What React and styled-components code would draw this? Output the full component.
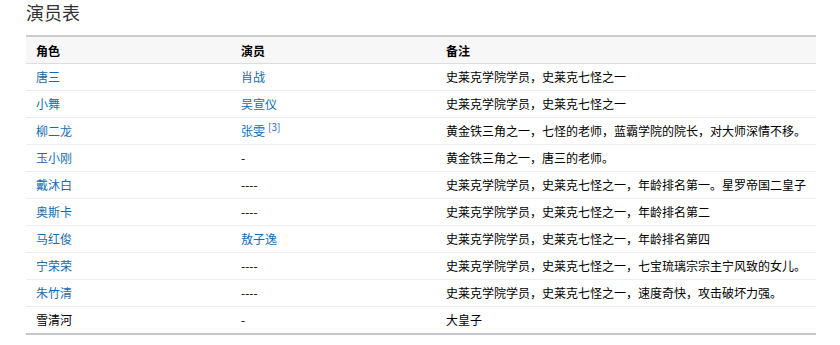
import React from 'react';
import styled, { createGlobalStyle } from 'styled-components';

const GlobalStyle = createGlobalStyle`
    html, body {
        margin: 0;
        padding: 0;
        background: #ffffff;
    }
    body {
        font-family: "Noto Sans CJK SC", "Liberation Sans", sans-serif;
        font-size: 12px;
        color: #222222;
    }
`

const Page = styled.div`
    width: 790px;
    padding: 1px 0 0 26px;
`

const Title = styled.h2`
    margin: 0 0 11px 0;
    height: 23px;
    font-size: 18px;
    line-height: 23px;
    font-weight: normal;
    color: #333333;
`

const Table = styled.table`
    width: 790px;
    border-collapse: collapse;
    table-layout: fixed;
    border-top: 2px solid #cccccc;
    border-bottom: 2px solid #c0c8d1;
`

const Th = styled.th`
    height: 26px;
    padding: 0 0 0 10px;
    text-align: left;
    font-weight: bold;
    font-size: 12px;
    color: #000000;
    background: #f7f7f7;
    border-bottom: 1px solid #dddddd;
    width: ${props => props.w ? `${props.w}px` : 'auto'};
`

const Row = styled.tr`
    & + & td {
        border-top: 1px solid #eeeeee;
    }
`

const Td = styled.td`
    height: 26px;
    padding: 0 0 0 10px;
    font-size: 12px;
    line-height: 16px;
    white-space: nowrap;
    color: ${props => props.link ? '#136cb2' : '#000000'};
`

const Sup = styled.sup`
    font-size: 10px;
    color: #3366cc;
    margin-left: 3px;
    vertical-align: 5px;
    line-height: 0;
`

const SEVEN = '史莱克学院学员，史莱克七怪之一'

const rows = [
    { role: '唐三', actor: '肖战', actorLink: true, note: SEVEN },
    { role: '小舞', actor: '吴宣仪', actorLink: true, note: SEVEN },
    { role: '柳二龙', actor: '张雯', actorLink: true, ref: '[3]', note: '黄金铁三角之一，七怪的老师，蓝霸学院的院长，对大师深情不移。' },
    { role: '玉小刚', actor: '-', note: '黄金铁三角之一，唐三的老师。' },
    { role: '戴沐白', actor: '----', note: SEVEN + '，年龄排名第一。星罗帝国二皇子' },
    { role: '奥斯卡', actor: '----', note: SEVEN + '，年龄排名第二' },
    { role: '马红俊', actor: '敖子逸', actorLink: true, note: SEVEN + '，年龄排名第四' },
    { role: '宁荣荣', actor: '----', note: SEVEN + '，七宝琉璃宗宗主宁风致的女儿。' },
    { role: '朱竹清', actor: '----', note: SEVEN + '，速度奇快，攻击破坏力强。' },
    { role: '雪清河', roleLink: false, actor: '-', note: '大皇子' },
]

const App = () => (
    <Page>
        <GlobalStyle />
        <Title>演员表</Title>
        <Table>
            <thead>
                <tr>
                    <Th w={195}>角色</Th>
                    <Th w={195}>演员</Th>
                    <Th>备注</Th>
                </tr>
            </thead>
            <tbody>
                {rows.map(r => (
                    <Row key={r.role}>
                        <Td link={r.roleLink !== false}>{r.role}</Td>
                        <Td link={r.actorLink}>
                            {r.actor}
                            {r.ref && <Sup>{r.ref}</Sup>}
                        </Td>
                        <Td>{r.note}</Td>
                    </Row>
                ))}
            </tbody>
        </Table>
    </Page>
)

export default App;
